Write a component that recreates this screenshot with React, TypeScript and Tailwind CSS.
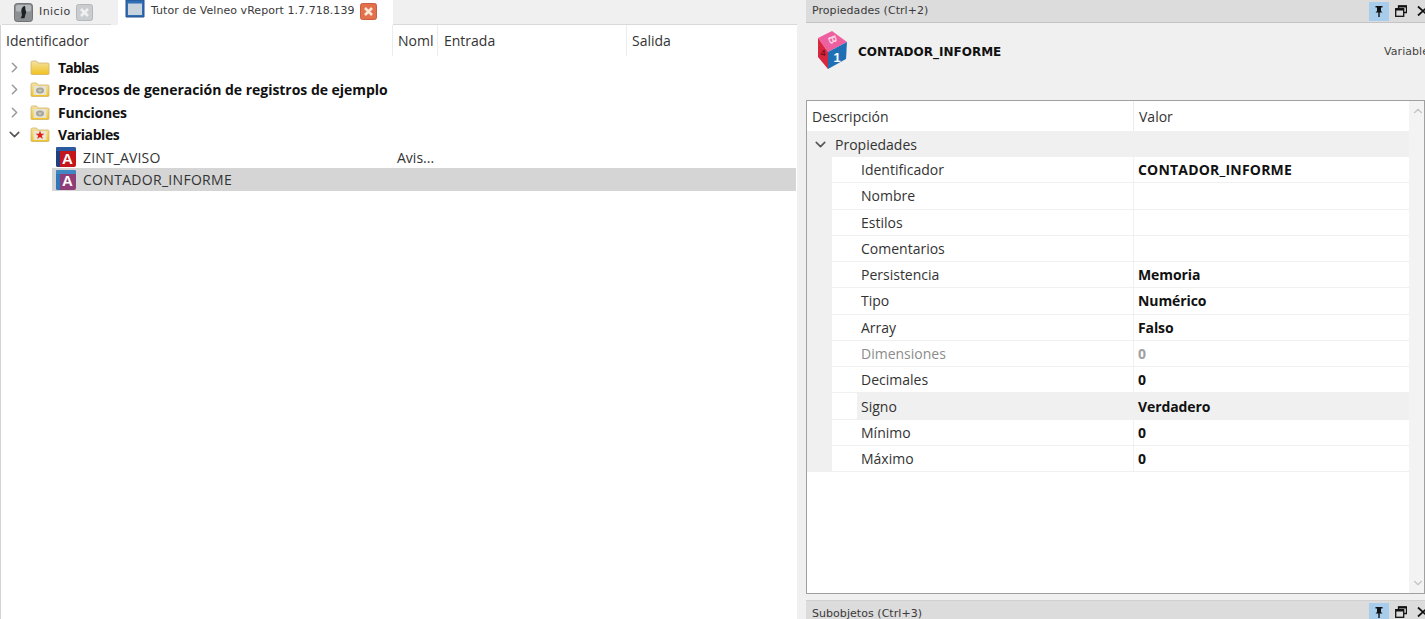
import React from "react";
import { ChevronDown, ChevronRight, ChevronUp } from "lucide-react";

const ui = "font-['Open_Sans',sans-serif]";

function CloseBox({ active }: { active?: boolean }) {
  return (
    <svg width="17" height="17" viewBox="0 0 17 17" className="shrink-0">
      <rect x="0.5" y="0.5" width="16" height="16" rx="2" fill={active ? "#e2704c" : "#c9cdd0"} stroke={active ? "#c9603f" : "#b4b8bb"} />
      <path d="M5 5l7 7M12 5l-7 7" stroke={active ? "#fde8d8" : "#eef0f1"} strokeWidth="2.6" />
    </svg>
  );
}

function HomeIcon() {
  return (
    <svg width="19" height="19" viewBox="0 0 20 20" className="shrink-0">
      <rect x="0.5" y="0.5" width="19" height="19" rx="3" fill="#8c9092" stroke="#6b6e70" />
      <rect x="2" y="2" width="16" height="7" rx="2" fill="#b5b8ba" />
      <path d="M11 3c-2 1-4 4-3 7 0 2 1 3 0 4l-1 2h4l1-4c1-2 1-3 0-5 0-2 0-3-1-4z" fill="#1d1f20" />
    </svg>
  );
}

function TabFolderIcon() {
  return (
    <svg width="20" height="18" viewBox="0 0 20 18" className="shrink-0 self-start">
      <path d="M1 0h18v17H1z" fill="#2f6db5" stroke="#24538c" />
      <rect x="3" y="3.5" width="14" height="11.5" fill="#c9d3de" />
    </svg>
  );
}

function TreeFolder({ mark }: { mark?: "gear" | "star" }) {
  const id = mark ?? "plain";
  return (
    <svg width="20" height="15" viewBox="0 0 20 15" className="shrink-0">
      <defs>
        <linearGradient id={`f-${id}`} x1="0" y1="0" x2="0" y2="1">
          <stop offset="0" stopColor="#f3e2a4" />
          <stop offset="1" stopColor="#f2c21d" />
        </linearGradient>
      </defs>
      <path d="M1 2.5q0-1.5 1.5-1.5h4l1.5 2h10q1 0 1 1v9.5q0 1-1 1H2q-1 0-1-1z" fill={`url(#f-${id})`} stroke="#cfb36a" strokeWidth="0.8" />
      {mark === "gear" && (
        <>
          <rect x="3.5" y="4" width="13" height="9" fill="#e6e3d2" />
          <ellipse cx="10" cy="8.5" rx="4" ry="3" fill="#a5a49b" />
          <ellipse cx="10" cy="8.5" rx="1.8" ry="1.3" fill="#c9c7ba" />
        </>
      )}
      {mark === "star" && (
        <>
          <rect x="3.5" y="4" width="13" height="9" fill="#ece6cf" />
          <path d="M10 3.8l1.2 3h3.2l-2.6 2 1 3.2-2.8-1.9-2.8 1.9 1-3.2-2.6-2h3.2z" fill="#e0201c" />
        </>
      )}
    </svg>
  );
}

function LetterIcon({ selected }: { selected?: boolean }) {
  return (
    <div className={`relative w-5 h-5 shrink-0 flex items-center justify-center overflow-hidden rounded-[2px] ${selected ? "bg-[#8f3d78]" : "bg-[#c4161c]"}`}>
      <div className={`absolute left-0 top-0 bottom-0 w-[4px] ${selected ? "bg-[#2f78b8]" : "bg-[#1f3f7f]"}`} />
      <div className={`absolute left-0 right-0 top-0 h-[4px] ${selected ? "bg-[#3f86c4]" : "bg-[#2a5aa0]"}`} />
      <span className="relative text-[15px] leading-none font-bold text-white font-['Liberation_Sans',sans-serif] pl-[3px] pt-[2px]">A</span>
    </div>
  );
}

function CubeIcon() {
  return (
    <svg width="32" height="41" viewBox="0 0 32 41" className="shrink-0">
      <path d="M2 9L16 2l15 11-19 10z" fill="#ee5fa0" />
      <path d="M2 9l10 14v17L2 28z" fill="#d7263d" />
      <path d="M12 23l19-10-1 17-18 10z" fill="#1f6fb5" />
      <text x="16" y="14" fontSize="11" fontWeight="700" fill="#fbd3e4" textAnchor="middle" fontFamily="Liberation Sans" transform="rotate(70 16 11)">B</text>
      <text x="7" y="27" fontSize="9" fontWeight="700" fill="#7c1020" textAnchor="middle" fontFamily="Liberation Sans">4</text>
      <text x="21" y="33" fontSize="13" fontWeight="700" fill="#fff" textAnchor="middle" fontFamily="Liberation Sans">1</text>
    </svg>
  );
}

function TitleButtons() {
  return (
    <div className="flex items-center h-full">
      <div className="w-[20px] h-[19px] bg-[#a8cdec] flex items-center justify-center">
        <svg width="12" height="12" viewBox="0 0 12 12">
          <path d="M2.5 1h7v1.5H8V6l1.5 1.5H6.7V12H5.3V7.5H2.5L4 6V2.5H2.5z" fill="#111" />
        </svg>
      </div>
      <svg width="12" height="12" viewBox="0 0 12 12" className="ml-[6px]" fill="none" stroke="#111" strokeWidth="1.3">
        <path d="M3.5 3V1h8v6.5H9" />
        <rect x="0.7" y="3.7" width="8" height="7.6" />
        <path d="M0.7 4.5h8M3.5 1.5h8" strokeWidth="2" />
      </svg>
      <svg width="12" height="12" viewBox="0 0 12 12" className="ml-[10px] shrink-0" stroke="#111" strokeWidth="1.7">
        <path d="M1 1.5l10 9M11 1.5l-10 9" />
      </svg>
    </div>
  );
}

function TitleBar({ label, className, labelClass }: { label: string; className?: string; labelClass?: string }) {
  return (
    <div className={`flex items-center justify-between bg-[#dcdcdc] pl-[6px] shrink-0 overflow-hidden ${className ?? ""}`}>
      <span className={`text-[11px] text-[#3a3a3a] font-['DejaVu_Sans',sans-serif] tracking-[0.05px] ${labelClass ?? ""}`}>{label}</span>
      <div className="mr-[-4px]">
        <TitleButtons />
      </div>
    </div>
  );
}

const treeGroups: { label: string; mark?: "gear" | "star"; open?: boolean; fit: string }[] = [
  { label: "Tablas", fit: "tracking-[-0.8px]" },
  { label: "Procesos de generación de registros de ejemplo", mark: "gear", fit: "tracking-[-0.03px]" },
  { label: "Funciones", mark: "gear", fit: "tracking-[-0.2px]" },
  { label: "Variables", mark: "star", open: true, fit: "tracking-[-0.4px]" },
];

const properties: { name: string; value?: string; dim?: boolean; hover?: boolean; fit?: string }[] = [
  { name: "Identificador", value: "CONTADOR_INFORME", fit: "tracking-[0.2px]" },
  { name: "Nombre" },
  { name: "Estilos" },
  { name: "Comentarios" },
  { name: "Persistencia", value: "Memoria" },
  { name: "Tipo", value: "Numérico" },
  { name: "Array", value: "Falso" },
  { name: "Dimensiones", value: "0", dim: true },
  { name: "Decimales", value: "0" },
  { name: "Signo", value: "Verdadero", hover: true },
  { name: "Mínimo", value: "0" },
  { name: "Máximo", value: "0" },
];

export default function App() {
  return (
    <div className={`${ui} w-[1425px] h-[619px] overflow-hidden flex bg-[#f0f0f0] text-[14px] text-[#222]`}>
      {/* Editor */}
      <div className="w-[797px] shrink-0 flex flex-col">
        <div className="h-[25px] flex shrink-0 font-['DejaVu_Sans',sans-serif] text-[11px] tracking-[0.05px] text-[#3a3a3a]">
          <div className="w-[109px] ml-[2px] border-b border-[#d9d9d9] flex items-center pl-[12px] bg-[#f0f0f0]">
            <HomeIcon />
            <span className="ml-[6px] mt-[1px] tracking-[0.4px]">Inicio</span>
            <span className="ml-[5px]">
              <CloseBox />
            </span>
          </div>
          <div className="w-[275px] ml-[7px] bg-white flex items-center pl-[7px] pb-[3px]">
            <TabFolderIcon />
            <span className="ml-[6px] whitespace-nowrap">Tutor de Velneo vReport 1.7.718.139</span>
            <span className="ml-[5px]">
              <CloseBox active />
            </span>
          </div>
          <div className="flex-1 border-b border-[#d9d9d9]" />
        </div>
        <div className="flex-1 bg-white border-l border-[#d4d4d4] flex flex-col">
          <div className="flex h-[31px] shrink-0 items-center text-[#333]">
            <div className="w-[392px] pl-[5px] h-full flex items-center border-r border-[#ececec] pb-[1px]">Identificador</div>
            <div className="w-[45px] pl-[5px] h-full flex items-center border-r border-[#ececec] overflow-hidden pb-[1px]">Noml</div>
            <div className="w-[189px] pl-[6px] h-full flex items-center border-r border-[#ececec] pb-[1px]">Entrada</div>
            <div className="flex-1 pl-[5px] h-full flex items-center pb-[1px]">Salida</div>
          </div>
          <div className="flex flex-col">
            {treeGroups.map((g) => (
              <div key={g.label} className="h-[22.5px] flex items-center">
                <div className="w-[29px] pl-[5px] shrink-0">
                  {g.open ? <ChevronDown size={17} strokeWidth={2.2} className="text-[#555]" /> : <ChevronRight size={17} strokeWidth={2.2} className="text-[#9a9a9a]" />}
                </div>
                <TreeFolder mark={g.mark} />
                <span className={`ml-[8px] font-bold text-[#111] whitespace-nowrap ${g.fit}`}>{g.label}</span>
              </div>
            ))}
            <div className="h-[22px] flex items-center pl-[55px]">
              <LetterIcon />
              <span className="ml-[7px] w-[314px] text-[#333] tracking-[0.15px]">ZINT_AVISO</span>
              <span className="text-[#333]">Avis...</span>
            </div>
            <div className="h-[23px] mr-[1px] flex items-center ml-[51px] pl-[4px] bg-[#d5d5d5]">
              <LetterIcon selected />
              <span className="ml-[7px] text-[#333] tracking-[0.3px]">CONTADOR_INFORME</span>
            </div>
          </div>
        </div>
      </div>

      {/* Properties dock */}
      <div className="w-[619px] ml-[9px] shrink-0 flex flex-col">
        <TitleBar label="Propiedades (Ctrl+2)" className="h-[23px] border-b border-[#c4c4c4]" />
        <div className="h-[77px] shrink-0 flex items-start pl-[10px] pt-[6px] relative">
          <CubeIcon />
          <span className="ml-[10px] mt-[14px] text-[12px] font-bold text-[#111] font-['DejaVu_Sans',sans-serif]">CONTADOR_INFORME</span>
          <span className="absolute right-[-4px] top-[21px] text-[11px] text-[#444] font-['DejaVu_Sans',sans-serif] tracking-[0.05px]">Variable</span>
        </div>
        <div className="h-[494px] shrink-0 bg-white border border-[#a0a0a0] flex overflow-hidden">
          <div className="flex-1 min-w-0 flex flex-col">
            <div className="h-[30px] shrink-0 flex items-center text-[#333]">
              <div className="w-[327px] pl-[5px] h-full flex items-center border-r border-[#ececec]">Descripción</div>
              <div className="pl-[5px]">Valor</div>
            </div>
            <div className="h-[26px] shrink-0 bg-[#f0f0f0] flex items-center pl-[5px] gap-[6px] text-[#333]">
              <ChevronDown size={17} strokeWidth={2.2} className="text-[#555]" />
              <span>Propiedades</span>
            </div>
            {properties.map((p) => (
              <div key={p.name} className="h-[26.27px] shrink-0 flex">
                <div className="w-[25px] shrink-0 bg-[#f0f0f0]" />
                <div className={`flex-1 flex border-b border-[#f0f0f0] ${p.hover ? "bg-[linear-gradient(to_right,#fff_25px,#f0f0f0_25px)]" : ""}`}>
                  <div className={`w-[302px] shrink-0 h-full flex items-center pl-[29px] border-r border-[#f0f0f0] ${p.dim ? "text-[#8c8c8c]" : "text-[#333]"}`}>{p.name}</div>
                  <div className={`pl-[4px] h-full flex items-center tracking-[-0.1px] ${p.dim ? "text-[#a0a0a0] font-bold" : "text-[#111] font-bold"} ${p.fit ?? ""}`}>{p.value}</div>
                </div>
              </div>
            ))}
          </div>
          <div className="w-[17px] shrink-0 bg-[#f3f3f3] flex flex-col items-center justify-between py-[3px] mr-[-2px]">
            <ChevronUp size={14} className="text-[#c4c4c4]" />
            <ChevronDown size={14} className="text-[#c4c4c4]" />
          </div>
        </div>
        <div className="h-[7px] shrink-0 border-b border-[#d0d0d0]" />
        <TitleBar label="Subobjetos (Ctrl+3)" className="h-[22px]" labelClass="mt-[4px]" />
      </div>
    </div>
  );
}
